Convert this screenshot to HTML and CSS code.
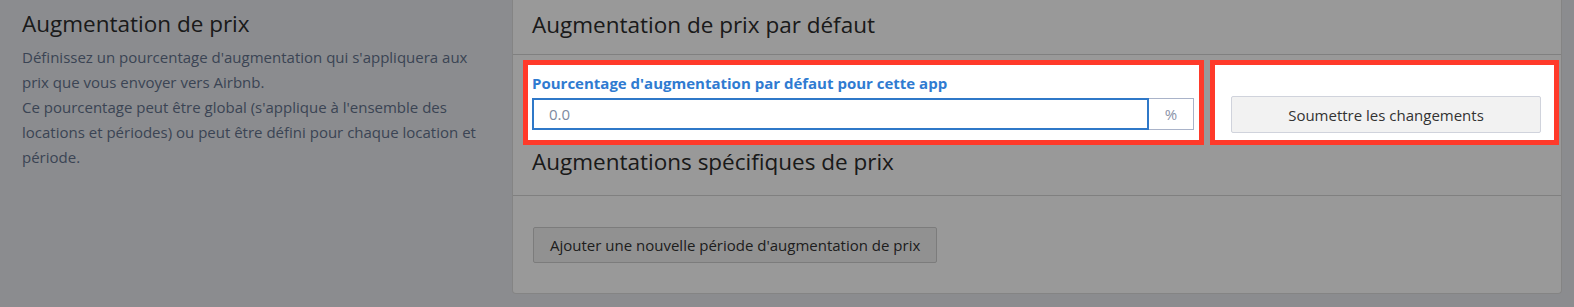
FILE: index.html
```html
<!DOCTYPE html>
<html lang="fr">
<head>
    <meta charset="UTF-8">
    <meta name="viewport" content="width=device-width, initial-scale=1.0">
    <title>Augmentation de prix</title>
    <link rel="stylesheet" href="styles.css">
</head>
<body>
    <div class="page">
        <div class="intro">
            <h2>Augmentation de prix</h2>
            <p>
                Définissez un pourcentage d'augmentation qui s'appliquera aux prix que vous envoyer vers Airbnb.<br>
                Ce pourcentage peut être global (s'applique à l'ensemble des locations et périodes) ou peut être défini pour chaque location et période.
            </p>
        </div>

        <div class="panel">
            <div class="panel-heading">
                <h3>Augmentation de prix par défaut</h3>
            </div>

            <div class="row">
                <div class="highlight form-box">
                    <label for="markup">Pourcentage d'augmentation par défaut pour cette app</label>
                    <div class="input-group">
                        <input type="text" id="markup" name="markup" placeholder="0.0">
                        <span class="addon">%</span>
                    </div>
                </div>
                <div class="highlight submit-box">
                    <button type="submit" class="btn">Soumettre les changements</button>
                </div>
            </div>

            <div class="panel-heading second">
                <h3>Augmentations spécifiques de prix</h3>
            </div>

            <div class="panel-body">
                <button type="button" class="btn">Ajouter une nouvelle période d'augmentation de prix</button>
            </div>
        </div>
    </div>

    <div class="overlay"></div>
</body>
</html>
```

FILE: styles.css
```css
body {
    font-family: "Open Sans", Arial, sans-serif;
    background-color: #e8eaef;
    margin: 0;
    padding: 0;
    color: #2c2c2c;
}

.page {
    display: flex;
    align-items: flex-start;
}

.intro {
    width: 512px;
    padding: 0 30px 0 22px;
    box-sizing: border-box;
}

.intro h2 {
    font-size: 22.5px;
    font-weight: 400;
    line-height: 32px;
    margin: 8px 0 5px;
}

.intro p {
    font-size: 15px;
    line-height: 25px;
    color: #63728c;
    margin: 0;
}

.panel {
    width: 1050px;
    height: 294px;
    box-sizing: border-box;
    background-color: #fff;
    border: 1px solid #dcdcdc;
    border-top: none;
    border-radius: 0 0 4px 4px;
}

.panel-heading {
    height: 55px;
    box-sizing: border-box;
    padding: 9px 0 0 19px;
    border-bottom: 1px solid #d6d6d6;
}

.panel-heading h3 {
    font-size: 22.5px;
    font-weight: 400;
    line-height: 32px;
    margin: 0;
}

.panel-heading.second {
    height: 50px;
    padding-top: 0;
    margin-top: 1px;
}

.row {
    display: flex;
    gap: 6px;
    margin-top: 5px;
    padding-left: 10px;
}

.highlight {
    position: relative;
    z-index: 20;
    background-color: #fff;
    border: 5px solid #ff3a2a;
    box-sizing: border-box;
    height: 85px;
}

.form-box {
    width: 681px;
    padding: 8px 5px 0 4px;
}

.form-box label {
    display: block;
    font-size: 15px;
    font-weight: 700;
    line-height: 20px;
    color: #2f7bd1;
    margin-bottom: 5px;
}

.input-group {
    display: flex;
    height: 32px;
}

.input-group input {
    flex: 1;
    border: 2px solid #2f78c8;
    padding: 0 15px;
    font-family: inherit;
    font-size: 15px;
    color: #333;
    outline: none;
}

.input-group input::placeholder {
    color: #7d8aa0;
}

.addon {
    width: 44px;
    border: 1px solid #a9b3c9;
    border-left: none;
    display: flex;
    align-items: center;
    justify-content: center;
    font-size: 15px;
    color: #8a93a8;
}

.submit-box {
    width: 349px;
    padding: 31px 13px 0 16px;
}

.btn {
    font-family: inherit;
    font-size: 15px;
    color: #333;
    background-color: #f2f2f2;
    border: 1px solid #d0d3dc;
    border-radius: 2px;
    height: 37px;
    padding: 0 16px;
    cursor: pointer;
}

.submit-box .btn {
    width: 100%;
}

.panel-body {
    padding: 31px 20px;
}

.panel-body .btn {
    height: 36px;
    border-color: #cfcfcf;
}

.overlay {
    position: fixed;
    top: 0;
    left: 0;
    right: 0;
    bottom: 0;
    background-color: rgba(0, 0, 0, 0.4);
    z-index: 10;
}
```
